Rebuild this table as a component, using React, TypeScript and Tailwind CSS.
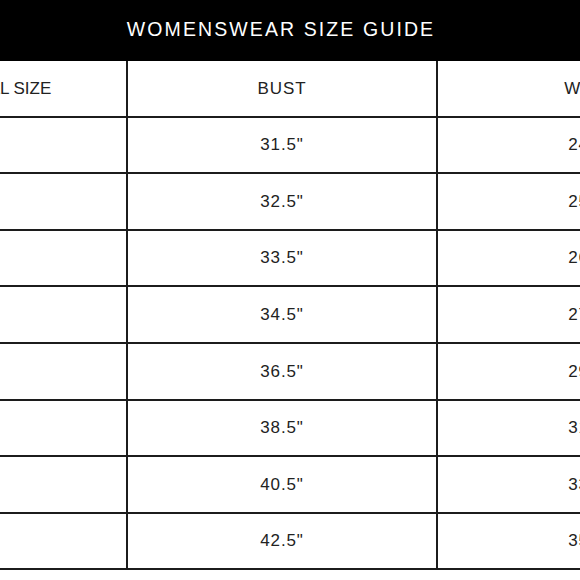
const rows = [
  { size: 'XXS', bust: '31.5"', waist: '24.5"' },
  { size: 'XS', bust: '32.5"', waist: '25.5"' },
  { size: 'S', bust: '33.5"', waist: '26.5"' },
  { size: 'M', bust: '34.5"', waist: '27.5"' },
  { size: 'L', bust: '36.5"', waist: '29.5"' },
  { size: 'XL', bust: '38.5"', waist: '31.5"' },
  { size: 'XXL', bust: '40.5"', waist: '33.5"' },
  { size: '3XL', bust: '42.5"', waist: '35.5"' },
];

const Cell = ({ children, last = false, className = '' }: { children: React.ReactNode; last?: boolean; className?: string }) => (
  <div
    className={`flex items-center justify-center h-full border-b-2 border-[#1c1c1c] ${last ? '' : 'border-r-2'} ${className}`}
  >
    {children}
  </div>
);

export default function App() {
  return (
    <div
      className="w-[580px] h-[580px] bg-white overflow-hidden"
      style={{ fontFamily: '"Liberation Sans", Arial, sans-serif' }}
    >
      {/* Title bar */}
      <div className="h-[61px] bg-black flex items-center justify-center pr-[18px] pb-[1px]">
        <span className="text-white text-[19.5px] tracking-[2.1px] leading-none">WOMENSWEAR SIZE GUIDE</span>
      </div>

      {/* Table */}
      <div className="ml-[-182px] w-[930px] text-[17px] tracking-[0.9px] text-[#222]">
        <div className="grid grid-cols-[310px_310px_310px] h-[56.6px]">
          <Cell className="tracking-normal pr-[18px]">INTERNATIONAL SIZE</Cell>
          <Cell>BUST</Cell>
          <Cell last>WAIST</Cell>
        </div>
        {rows.map((r) => (
          <div key={r.bust} className="grid grid-cols-[310px_310px_310px] h-[56.6px]">
            <Cell>{r.size}</Cell>
            <Cell>{r.bust}</Cell>
            <Cell last className="pr-[6px]">{r.waist}</Cell>
          </div>
        ))}
      </div>
    </div>
  );
}
